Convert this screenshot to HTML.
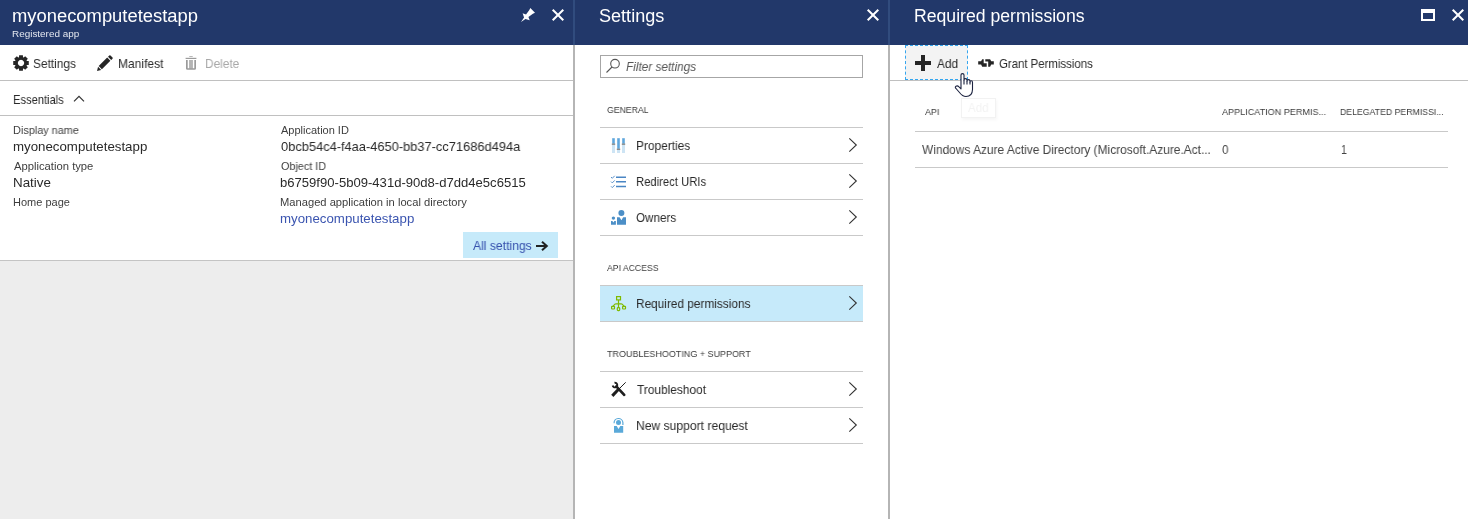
<!DOCTYPE html>
<html><head><meta charset="utf-8">
<style>
html,body{margin:0;padding:0;}
body{width:1468px;height:519px;overflow:hidden;background:#fff;font-family:"Liberation Sans",sans-serif;color:#252525;position:relative;}
.abs{position:absolute;}
.blade{position:absolute;top:0;height:519px;background:#fff;}
.hdr{position:absolute;left:0;top:0;right:0;height:45px;background:#22386a;}
.t{position:absolute;white-space:nowrap;transform-origin:0 50%;will-change:transform;}
.hl{position:absolute;height:1px;background:#c9c9c9;}
.vl{position:absolute;width:2px;top:0;height:519px;background:#b5b5b5;}
svg{position:absolute;overflow:visible;}
</style></head><body>

<!-- Blade 1 -->
<div class="blade" style="left:0;width:573px;">
  <div class="hdr"></div>
  <div class="hl" style="left:0;width:573px;top:80px;background:#c0c0c0;"></div>
  <div class="hl" style="left:0;width:573px;top:115px;background:#c0c0c0;"></div>

  <div class="abs" style="left:463px;top:232px;width:95px;height:26px;background:#c6eafa;"></div>
  <div class="hl" style="left:0;width:573px;top:260px;background:#c4c4c4;"></div>
  <div class="abs" style="left:0;top:261px;width:573px;height:258px;background:#ededed;"></div>
</div>
<div class="vl" style="left:573px;"></div>
<div class="abs" style="left:573px;top:0;width:2px;height:45px;background:#314c7e;"></div>

<!-- Blade 2 -->
<div class="blade" style="left:575px;width:313px;">
  <div class="hdr"></div>
  <div class="abs" style="left:25px;top:55px;width:261px;height:21px;border:1px solid #a6a6a6;"></div>
  <div class="hl" style="left:25px;width:263px;top:127px;"></div>
  <div class="hl" style="left:25px;width:263px;top:163px;"></div>
  <div class="hl" style="left:25px;width:263px;top:199px;"></div>
  <div class="hl" style="left:25px;width:263px;top:235px;"></div>
  <div class="hl" style="left:25px;width:263px;top:285px;"></div>
  <div class="abs" style="left:25px;top:286px;width:263px;height:35px;background:#c6eafa;"></div>
  <div class="hl" style="left:25px;width:263px;top:321px;"></div>
  <div class="hl" style="left:25px;width:263px;top:371px;"></div>
  <div class="hl" style="left:25px;width:263px;top:407px;"></div>
  <div class="hl" style="left:25px;width:263px;top:443px;"></div>
</div>
<div class="vl" style="left:888px;"></div>
<div class="abs" style="left:888px;top:0;width:2px;height:45px;background:#314c7e;"></div>

<!-- Blade 3 -->
<div class="blade" style="left:890px;width:578px;">
  <div class="hdr"></div>
  <div class="hl" style="left:0;width:578px;top:80px;background:#c0c0c0;"></div>
  <div class="abs" style="left:15px;top:45px;width:61px;height:33px;border:1px dashed #35a6ef;background:#f3f3f3;"></div>
  <div class="hl" style="left:25px;width:533px;top:131px;"></div>
  <div class="hl" style="left:25px;width:533px;top:167px;"></div>
</div>

<div class="abs" style="left:961px;top:98px;width:33px;height:18px;border:1px solid #f2f2f2;background:#fff;box-shadow:1px 2px 3px rgba(0,0,0,0.04);"></div>
<div class="t" style="left:12.3px;top:6px;font-size:17.5px;line-height:20px;color:#fff;transform:scaleX(1.0503);">myonecomputetestapp</div>
<div class="t" style="left:12.4px;top:28px;font-size:9.5px;line-height:11px;color:#e3e7ef;transform:scaleX(1.0429);">Registered app</div>
<div class="t" style="left:33.3px;top:56px;font-size:13px;line-height:15px;color:#2a2a2a;transform:scaleX(0.9152);">Settings</div>
<div class="t" style="left:117.7px;top:56px;font-size:13px;line-height:15px;color:#2a2a2a;transform:scaleX(0.9250);">Manifest</div>
<div class="t" style="left:204.5px;top:56px;font-size:13px;line-height:15px;color:#a8a8a8;transform:scaleX(0.9139);">Delete</div>
<div class="t" style="left:12.6px;top:92px;font-size:13px;line-height:15px;color:#2a2a2a;transform:scaleX(0.8552);">Essentials</div>
<div class="t" style="left:12.5px;top:124px;font-size:11px;line-height:12px;color:#3d3d3d;transform:scaleX(0.9892);">Display name</div>
<div class="t" style="left:12.5px;top:139px;font-size:13px;line-height:15px;color:#2a2a2a;transform:scaleX(1.0208);">myonecomputetestapp</div>
<div class="t" style="left:13.5px;top:160px;font-size:11px;line-height:12px;color:#3d3d3d;transform:scaleX(1.0221);">Application type</div>
<div class="t" style="left:12.8px;top:175px;font-size:13px;line-height:15px;color:#2a2a2a;transform:scaleX(1.0286);">Native</div>
<div class="t" style="left:12.5px;top:196px;font-size:11px;line-height:12px;color:#3d3d3d;transform:scaleX(0.9964);">Home page</div>
<div class="t" style="left:281.0px;top:124px;font-size:11px;line-height:12px;color:#3d3d3d;transform:scaleX(0.9971);">Application ID</div>
<div class="t" style="left:281.0px;top:139px;font-size:13px;line-height:15px;color:#2a2a2a;transform:scaleX(0.9880);">0bcb54c4-f4aa-4650-bb37-cc71686d494a</div>
<div class="t" style="left:281.0px;top:160px;font-size:11px;line-height:12px;color:#3d3d3d;transform:scaleX(0.9826);">Object ID</div>
<div class="t" style="left:280.0px;top:175px;font-size:13px;line-height:15px;color:#2a2a2a;transform:scaleX(1.0058);">b6759f90-5b09-431d-90d8-d7dd4e5c6515</div>
<div class="t" style="left:280.0px;top:196px;font-size:11px;line-height:12px;color:#3d3d3d;transform:scaleX(1.0148);">Managed application in local directory</div>
<div class="t" style="left:280.0px;top:211px;font-size:13px;line-height:15px;color:#3b55b0;transform:scaleX(1.0208);">myonecomputetestapp</div>
<div class="t" style="left:473.0px;top:238px;font-size:13px;line-height:15px;color:#3550ad;transform:scaleX(0.9339);">All settings</div>
<div class="t" style="left:598.9px;top:6px;font-size:17.5px;line-height:20px;color:#fff;transform:scaleX(1.0323);">Settings</div>
<div class="t" style="left:626.2px;top:59px;font-size:13px;line-height:15px;color:#555;transform:scaleX(0.9078);font-style:italic;">Filter settings</div>
<div class="t" style="left:607.2px;top:104px;font-size:9.5px;line-height:11px;color:#3a3a3a;transform:scaleX(0.9156);">GENERAL</div>
<div class="t" style="left:635.7px;top:138px;font-size:13px;line-height:15px;color:#2a2a2a;transform:scaleX(0.9155);">Properties</div>
<div class="t" style="left:635.7px;top:174px;font-size:13px;line-height:15px;color:#2a2a2a;transform:scaleX(0.8662);">Redirect URIs</div>
<div class="t" style="left:636.4px;top:210px;font-size:13px;line-height:15px;color:#2a2a2a;transform:scaleX(0.8977);">Owners</div>
<div class="t" style="left:607.2px;top:262px;font-size:9.5px;line-height:11px;color:#3a3a3a;transform:scaleX(0.9125);">API ACCESS</div>
<div class="t" style="left:635.6px;top:296px;font-size:13px;line-height:15px;color:#2a2a2a;transform:scaleX(0.9105);">Required permissions</div>
<div class="t" style="left:607.2px;top:348px;font-size:9.5px;line-height:11px;color:#3a3a3a;transform:scaleX(0.9454);">TROUBLESHOOTING + SUPPORT</div>
<div class="t" style="left:636.6px;top:382px;font-size:13px;line-height:15px;color:#2a2a2a;transform:scaleX(0.9160);">Troubleshoot</div>
<div class="t" style="left:635.6px;top:418px;font-size:13px;line-height:15px;color:#2a2a2a;transform:scaleX(0.9328);">New support request</div>
<div class="t" style="left:914.4px;top:6px;font-size:17.5px;line-height:20px;color:#fff;transform:scaleX(1.0077);">Required permissions</div>
<div class="t" style="left:936.5px;top:56px;font-size:13px;line-height:15px;color:#2a2a2a;transform:scaleX(0.9087);">Add</div>
<div class="t" style="left:999.4px;top:56px;font-size:13px;line-height:15px;color:#2a2a2a;transform:scaleX(0.8766);">Grant Permissions</div>
<div class="t" style="left:967.6px;top:100px;font-size:13px;line-height:15px;color:#f3f3f3;transform:scaleX(0.8870);">Add</div>
<div class="t" style="left:925.3px;top:106px;font-size:9.5px;line-height:11px;color:#3a3a3a;transform:scaleX(0.9400);">API</div>
<div class="t" style="left:1222.0px;top:106px;font-size:9.5px;line-height:11px;color:#3a3a3a;transform:scaleX(0.9546);">APPLICATION PERMIS...</div>
<div class="t" style="left:1340.1px;top:106px;font-size:9.5px;line-height:11px;color:#3a3a3a;transform:scaleX(0.9180);">DELEGATED PERMISSI...</div>
<div class="t" style="left:922.4px;top:142px;font-size:13px;line-height:15px;color:#444;transform:scaleX(0.9172);">Windows Azure Active Directory (Microsoft.Azure.Act...</div>
<div class="t" style="left:1222.2px;top:142px;font-size:13px;line-height:15px;color:#444;transform:scaleX(0.9000);">0</div>
<div class="t" style="left:1340.5px;top:142px;font-size:13px;line-height:15px;color:#444;transform:scaleX(0.8167);">1</div>
<svg width="1468" height="519" viewBox="0 0 1468 519" style="left:0;top:0;pointer-events:none;">
<!-- blade1 header icons -->
<g fill="#fff" transform="translate(521,8)"><polygon points="0.00,14.00 3.04,9.55 1.63,5.30 5.02,6.58 8.34,2.12 9.33,-0.00 14.00,4.67 11.88,5.66 7.42,8.98 8.70,12.37 4.45,10.96"/></g>
<g stroke="#fff" stroke-width="2" fill="none">
<path d="M552.7,9.7L563.3,20.3M563.3,9.7L552.7,20.3"/>
<path d="M867.7,9.7L878.3,20.3M878.3,9.7L867.7,20.3"/>
<path d="M1452.7,9.7L1463.300,20.3M1463.3,9.7L1452.7,20.3"/>
</g>
<path fill="#fff" fill-rule="evenodd" d="M1421,9h14v12h-14zM1423,13v6h10v-6z"/>
<!-- gear -->
<g transform="translate(13,55)" fill="#252525"><path fill-rule="evenodd" d="M13.87,5.99 L15.77,6.10 L15.77,9.90 L13.87,10.01 L13.57,10.73 L14.84,12.15 L12.15,14.84 L10.73,13.57 L10.01,13.87 L9.90,15.77 L6.10,15.77 L5.99,13.87 L5.27,13.57 L3.85,14.84 L1.16,12.15 L2.43,10.73 L2.13,10.01 L0.23,9.90 L0.23,6.10 L2.13,5.99 L2.43,5.27 L1.16,3.85 L3.85,1.16 L5.27,2.43 L5.99,2.13 L6.10,0.23 L9.90,0.23 L10.01,2.13 L10.73,2.43 L12.15,1.16 L14.84,3.85 L13.57,5.27Z M8,4.8a3.2,3.2 0 1,0 0.001,0z"/></g>
<!-- pencil -->
<g transform="translate(97,55)" fill="#252525">
<polygon points="0,16 1.1,11.8 4.2,14.9"/>
<polygon points="1.7,11.1 10.2,2.6 13.4,5.8 4.9,14.3"/>
<path d="M11,1.8 L12.3,0.5 Q12.9,-0.1 13.5,0.5 L15.5,2.5 Q16.100,3.100 15.5,3.700 L14.2,5Z"/>
</g>
<!-- trash -->
<g fill="#9b9b9b">
<rect x="189.300" y="56" width="3.400" height="0.900" fill="#b0b0b0"/>
<rect x="185.600" y="57.800" width="10.800" height="1.200"/>
<path fill-rule="evenodd" d="M186,60h10v8.400q0,1.400 -1.400,1.400h-7.200q-1.400,0 -1.400,-1.400zM187.700,60v8.300h1.400v-8.300zM192.900,60v8.300h1.400v-8.300z"/>
<rect x="189.100" y="60" width="3.800" height="8.300" fill="#fff" fill-opacity="0.250"/>
</g>
<!-- essentials chevron -->
<path d="M74,101.300L79,96.300L84,101.300" fill="none" stroke="#333" stroke-width="1.200"/>
<!-- all settings arrow -->
<path d="M536,246H546.500M542,241.700L546.800,246L542,250.300" fill="none" stroke="#222" stroke-width="2"/>
<!-- search -->
<g fill="none" stroke="#555" stroke-width="1.100"><circle cx="615" cy="63.700" r="4.300"/><path d="M612,67L606.500,72.500"/></g>
<!-- row chevrons -->
<g fill="none" stroke="#333" stroke-width="1.100">
<path d="M849.300,138.300L856.300,145L849.300,151.700"/>
<path d="M849.300,174.300L856.300,181L849.300,187.700"/>
<path d="M849.300,210.300L856.300,217L849.300,223.700"/>
<path d="M849.300,296.300L856.300,303L849.300,309.700"/>
<path d="M849.300,382.300L856.300,389L849.300,395.700"/>
<path d="M849.300,418.300L856.300,425L849.300,431.700"/>
</g>
<!-- properties icon -->
<g>
<rect x="612" y="138" width="3" height="15" fill="#cde4f4"/><rect x="617" y="138" width="3" height="15" fill="#cde4f4"/><rect x="622" y="138" width="3" height="15" fill="#cde4f4"/>
<rect x="612.300" y="138.300" width="2.400" height="5.500" fill="#5ea6dc"/><rect x="617.300" y="138.300" width="2.400" height="10.500" fill="#5ea6dc"/><rect x="622.300" y="138.300" width="2.400" height="5.500" fill="#5ea6dc"/>
<rect x="611.800" y="143.500" width="3.400" height="1.400" fill="#8c8c8c"/><rect x="616.800" y="148.600" width="3.400" height="1.400" fill="#8c8c8c"/><rect x="621.800" y="143.500" width="3.400" height="1.400" fill="#8c8c8c"/>
</g>
<!-- redirect icon -->
<g stroke="#4a86c4" fill="none">
<path stroke-width="1.400" d="M616,177.200H626M616,181.800H626M616,186.500H626"/>
<path stroke-width="0.900" d="M611,177L612.300,178.300L614.700,175.800M611,181.600L612.300,182.900L614.700,180.400M611,186.300L612.300,187.600L614.700,185.100"/>
</g>
<!-- owners icon -->
<g fill="#4c8fc7">
<circle cx="621.400" cy="213.100" r="3"/>
<path d="M617,217.200h2.600l1.800,3l1.800,-3h2.800v7.600h-9z"/>
<circle cx="613.400" cy="218.100" r="1.700"/>
<path d="M611,221h1.400l1,1.600l1,-1.600h1.500v3.800h-4.900z"/>
</g>
<!-- required perms icon -->
<g fill="none" stroke="#7fba00" stroke-width="1.200">
<rect x="616.600" y="296.600" width="3.900" height="3.300"/>
<path d="M618.500,300V307.300M615.300,303.800H621.800M615.300,303.800L613,306.200M621.800,303.800L624.100,306.200"/>
<rect x="611.600" y="306.300" width="2.900" height="2.700" rx="0.500"/>
<rect x="622.600" y="306.300" width="2.900" height="2.700" rx="0.500"/>
<rect x="617.300" y="307.600" width="2.400" height="3" rx="0.800"/>
</g>
<!-- troubleshoot icon -->
<g fill="none" stroke="#1e1e1e">
<path stroke-width="2.700" stroke-linecap="round" d="M616.300,386.400L624.200,394.800"/>
<path stroke-width="1.900" d="M614.500,382.800A2.300,2.300 0 1 1 612.700,385.500"/>
<path stroke-width="1" stroke-linecap="round" d="M625.400,382.600L618.800,389.200"/>
<path stroke-width="3" d="M618.300,389.500L612.300,395.900"/>
</g>
<!-- support icon -->
<g fill="#5aa9d9">
<circle cx="618.500" cy="422.500" r="2.500"/>
<path d="M614,426h2.700l1.800,3.100l1.800,-3.100h2.900v6.800h-9.200z"/>
<path d="M614.100,423.200A4.400,4.400 0 0 1 622.900,422.600V425" fill="none" stroke="#5aa9d9" stroke-width="1.200"/>
</g>
<!-- plus -->
<path d="M921,55h4v6h6v4h-6v6h-4v-6h-6v-4h6z" fill="#252525"/>
<!-- grant icon -->
<g fill="#252525">
<path d="M978.200,61.300H981.100L982.200,59.200H983.700V63.200H986.700V66.700H982.200L981.100,64.600H978.200Z"/>
<path d="M985.300,59.200H990.100L991.200,61.300H993.800V64.600H991.200L990.100,66.700H988.200V61.500H985.300Z"/>
</g>
<!-- hand cursor -->
<g stroke="#1c2340" stroke-width="1.100" fill="#fff" stroke-linejoin="round">
<path d="M961,87 L961,75 Q961,73.600 962.5,73.600 Q964,73.600 964,75 L964,80 Q964,78.600 965.5,78.600 Q967,78.600 967,80.200 L967,81 Q967,79.600 968.5,79.600 Q970,79.600 970,81.200 L970,82 Q970,80.800 971.300,80.800 Q972.5,80.800 972.5,82.5 L972.5,89.5 Q972.300,96.5 966,96.5 Q962.5,96.5 959.5,92.5 L956,88.5 Q954.600,87 956,86.200 Q957.5,85.400 959,86.900 L961,88.800 Z"/>
<path d="M964,80V84.500M967,81V84.500M970,82V84.500" fill="none"/>
</g>
</svg>

</body></html>
